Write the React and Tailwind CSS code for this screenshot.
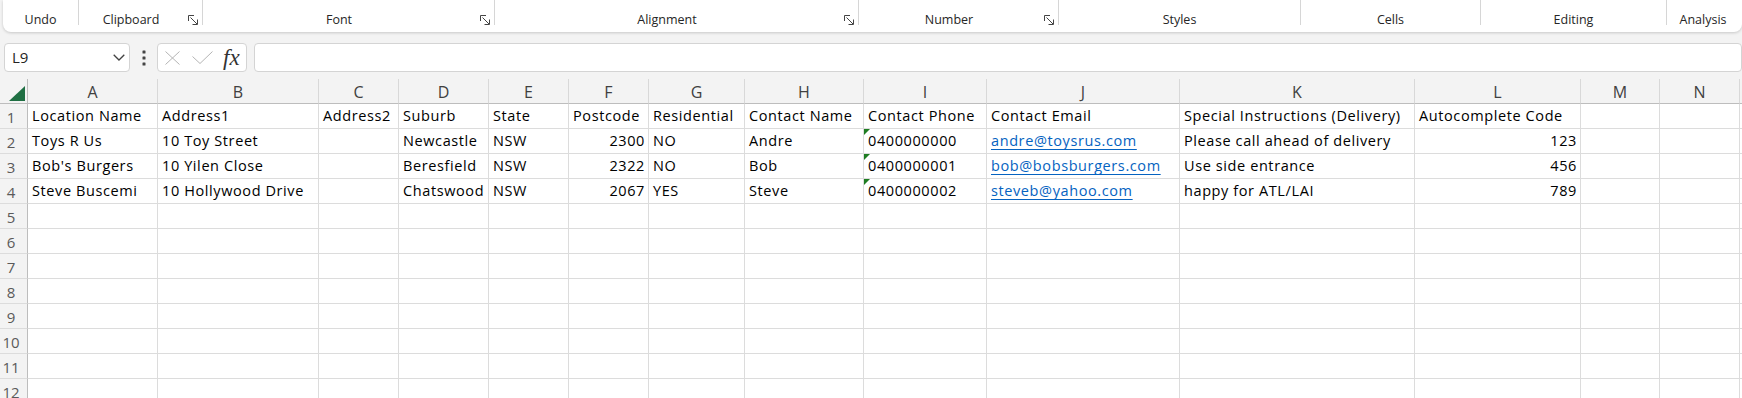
import React from 'react';

const ribbonGroups = [
  { label: 'Undo', w: 'w-[75px]' },
  { label: 'Clipboard', w: 'w-[123px]', launcher: true },
  { label: 'Font', w: 'w-[291px]', launcher: true },
  { label: 'Alignment', w: 'w-[363px]', launcher: true },
  { label: 'Number', w: 'w-[199px]', launcher: true },
  { label: 'Styles', w: 'w-[241px]' },
  { label: 'Cells', w: 'w-[179px]' },
  { label: 'Editing', w: 'w-[185px]' },
  { label: 'Analysis', w: 'w-[72px]' },
];

// last column is only the sliver past N, its letter is off screen
const columns = ['A', 'B', 'C', 'D', 'E', 'F', 'G', 'H', 'I', 'J', 'K', 'L', 'M', 'N', ''];

// numbers are right aligned like Excel does, phone cells carry the green error flag
const rows = [
  ['Location Name', 'Address1', 'Address2', 'Suburb', 'State', 'Postcode', 'Residential', 'Contact Name', 'Contact Phone', 'Contact Email', 'Special Instructions (Delivery)', 'Autocomplete Code'],
  ['Toys R Us', '10 Toy Street', '', 'Newcastle', 'NSW', 2300, 'NO', 'Andre', { flag: '0400000000' }, { link: 'andre@toysrus.com' }, 'Please call ahead of delivery', 123],
  ["Bob's Burgers", '10 Yilen Close', '', 'Beresfield', 'NSW', 2322, 'NO', 'Bob', { flag: '0400000001' }, { link: 'bob@bobsburgers.com' }, 'Use side entrance', 456],
  ['Steve Buscemi', '10 Hollywood Drive', '', 'Chatswood', 'NSW', 2067, 'YES', 'Steve', { flag: '0400000002' }, { link: 'steveb@yahoo.com' }, 'happy for ATL/LAI', 789],
];

const rowCount = 12;

const Launcher = () => (
  <svg width="10" height="10" viewBox="0 0 10 10" className="mb-[3px] ml-[5px] mr-[4px] shrink-0" fill="none" stroke="#444" strokeWidth="1">
    <path d="M0.5 6V0.5H6" />
    <path d="M2.5 2.5L9 9" />
    <path d="M9.5 4.5V9.5H4.5" />
  </svg>
);

const Ribbon = () => (
  <div className="ml-[3px] flex h-[32px] rounded-b-[8px] bg-white shadow-[0_1px_3px_rgba(0,0,0,0.18)] font-['Open_Sans',sans-serif] text-[12.5px] text-[#262626]">
    {ribbonGroups.map((g, i) => (
      <React.Fragment key={g.label}>
        <div className={`${g.w} flex shrink-0 items-end pb-[4px]`}>
          <span className="flex-1 text-center leading-[16px]">{g.label}</span>
          {g.launcher && <Launcher />}
        </div>
        {i < ribbonGroups.length - 1 && <div className="h-[25px] w-px shrink-0 bg-[#d6d6d6]" />}
      </React.Fragment>
    ))}
  </div>
);

const FormulaBar = () => (
  <div className="mt-[11px] flex h-[29px] items-stretch font-['Open_Sans',sans-serif]">
    <div className="ml-[4px] flex w-[126px] items-center rounded-[4px] border border-[#d4d4d4] bg-white pl-[7px] pr-[4px]">
      <span className="text-[15px] text-[#242424]">L9</span>
      <svg width="12" height="7" viewBox="0 0 12 7" className="ml-auto" fill="none" stroke="#424242" strokeWidth="1.3">
        <polyline points="0.7,0.7 6,6 11.3,0.7" />
      </svg>
    </div>
    <div className="flex w-[27px] items-center justify-center">
      <svg width="4" height="16" viewBox="0 0 4 16" fill="#444">
        <rect x="0.5" y="0.5" width="3" height="3" rx="0.5" />
        <rect x="0.5" y="6.5" width="3" height="3" rx="0.5" />
        <rect x="0.5" y="12.5" width="3" height="3" rx="0.5" />
      </svg>
    </div>
    <div className="flex w-[90px] items-center rounded-[4px] border border-[#d4d4d4] bg-white pl-[7px]">
      <svg width="15" height="14" viewBox="0 0 15 14" fill="none" stroke="#b4b4b4" strokeWidth="1">
        <path d="M0.5 0.5L14.5 13.5M14.5 0.5L0.5 13.5" />
      </svg>
      <svg width="21" height="13" viewBox="0 0 21 13" className="ml-[12px]" fill="none" stroke="#b4b4b4" strokeWidth="1">
        <polyline points="0.5,5.5 8,12.5 20.5,0.5" />
      </svg>
      <span className="ml-[10px] font-['Liberation_Serif',serif] text-[23px] italic leading-none text-[#333]">fx</span>
    </div>
    <div className="ml-[7px] flex-1 rounded-[4px] border border-[#d4d4d4] bg-white" />
  </div>
);

const Cell = ({ value }) => {
  if (value && typeof value === 'object' && value.link) {
    return (
      <div className="h-[25px] overflow-hidden whitespace-nowrap border-b border-r border-[#dcdcdc] bg-white pl-[4px] pr-[3px] leading-[24px]">
        <span className="text-[#0563c1] underline decoration-1 underline-offset-[3px]">{value.link}</span>
      </div>
    );
  }
  if (value && typeof value === 'object' && value.flag) {
    return (
      <div className="relative h-[25px] overflow-hidden whitespace-nowrap border-b border-r border-[#dcdcdc] bg-white pl-[4px] pr-[3px] leading-[24px]">
        <svg width="6" height="6" viewBox="0 0 6 6" className="absolute left-0 top-0">
          <polygon points="0,0 6,0 0,6" fill="#1e7d22" />
        </svg>
        {value.flag}
      </div>
    );
  }
  const isNum = typeof value === 'number';
  return (
    <div className={`h-[25px] overflow-hidden whitespace-nowrap border-b border-r border-[#dcdcdc] bg-white pl-[4px] pr-[3px] leading-[24px] ${isNum ? 'text-right' : ''}`}>
      {value}
    </div>
  );
};

const Grid = () => (
  <div className="mt-[7px] grid w-[1860px] grid-cols-[28px_130px_161px_80px_90px_80px_80px_96px_119px_123px_193px_235px_166px_79px_80px_120px] font-['Open_Sans',sans-serif]">
    {/* select-all corner */}
    <div className="flex h-[25px] items-end justify-end border-b border-r border-b-[#bdbdbd] border-r-[#bdbdbd] pb-[2px] pr-[2px]">
      <svg width="16" height="15" viewBox="0 0 16 15">
        <polygon points="16,0 16,15 0,15" fill="#1f6f43" />
      </svg>
    </div>
    {columns.map((c, ci) => (
      <div key={ci} className="h-[25px] border-b border-r border-b-[#bdbdbd] border-r-[#d8d8d8] pt-[1px] text-center text-[16px] leading-[24px] text-[#404040]">
        {c}
      </div>
    ))}

    {Array.from({ length: rowCount }, (_, r) => (
      <React.Fragment key={r}>
        <div className="h-[25px] border-b border-r border-b-[#dcdcdc] border-r-[#bdbdbd] pr-[5px] pt-[1px] text-center text-[15px] leading-[24px] text-[#5a5a5a]">
          {r + 1}
        </div>
        {columns.map((c, ci) => (
          <div key={ci} className="text-[14.5px] tracking-[0.6px] text-black">
            <Cell value={rows[r] ? rows[r][ci] ?? '' : ''} />
          </div>
        ))}
      </React.Fragment>
    ))}
  </div>
);

export default function App() {
  return (
    <div className="h-[398px] w-[1742px] overflow-hidden bg-[#f3f3f3]">
      <Ribbon />
      <FormulaBar />
      <Grid />
    </div>
  );
}
